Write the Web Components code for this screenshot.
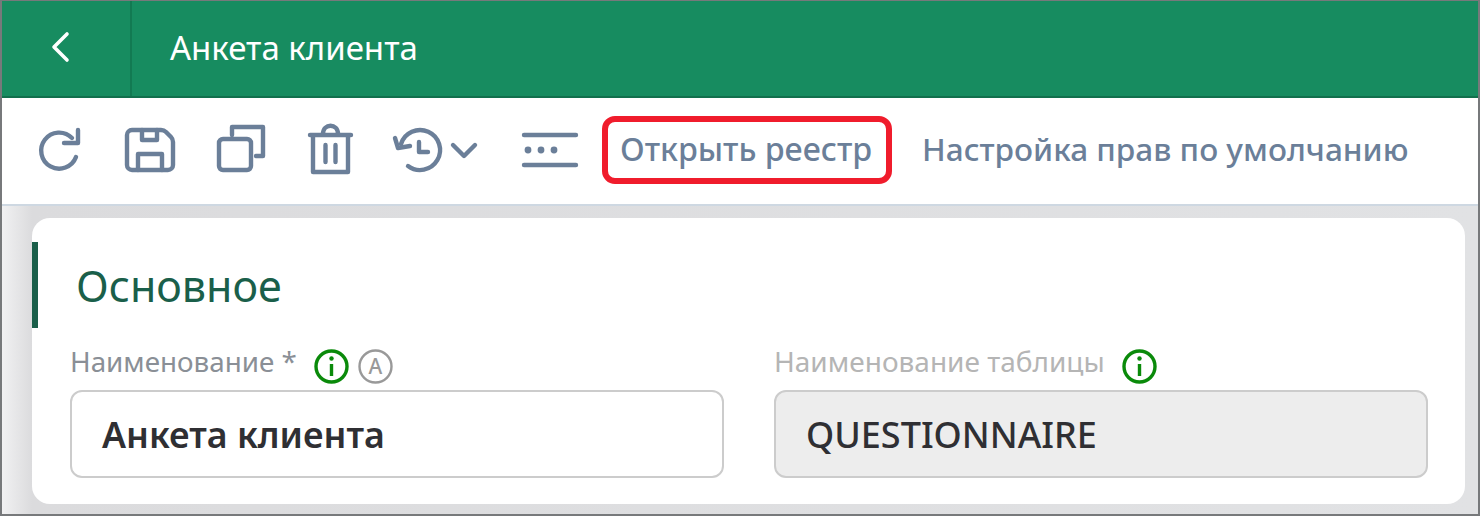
<!DOCTYPE html>
<html><head><meta charset="utf-8"><style>
html,body{margin:0;padding:0;height:516px;overflow:hidden;background:#fff}
body{font-family:"Noto Sans",Roboto,sans-serif}
</style></head><body>
<app-frame>
<app-header title-text="Анкета клиента"></app-header>
<app-toolbar></app-toolbar>
<section-card>
 <form-field slot="a" label="Наименование *" value="Анкета клиента" auto></form-field>
 <form-field slot="b" label="Наименование таблицы" value="QUESTIONNAIRE" disabled></form-field>
</section-card>
</app-frame>
<script>
function def(name,html){customElements.define(name,class extends HTMLElement{constructor(){super();this.attachShadow({mode:'open'}).innerHTML=html;}});}
def('app-frame',`<style>:host{display:flex;flex-direction:column;box-sizing:border-box;width:1480px;height:516px;border:solid #77797b;border-width:1px 2px 2px 2px;background:linear-gradient(90deg,#f1f1f2 0,#dbdbdd 30px,#e1e2e4 100%)}</style><slot></slot>`);
def('app-header',`<style>:host{display:flex;box-sizing:border-box;height:97px;background:#178c60;border-bottom:2px solid #12704d;color:#fff;flex:none}
.b{box-sizing:border-box;width:130px;padding:0 0 0 48px;display:flex;align-items:center;border-right:2px solid #127a52}
.t{font-size:33px;line-height:94px;padding-left:38px;white-space:nowrap}
svg{display:block;margin-top:-4px}</style><div class="b"><svg width="20" height="32" viewBox="0 0 20 32" fill="none" stroke="#fff" stroke-width="3.600" stroke-linecap="round" stroke-linejoin="round"><path d="M17 3 4 16 17 29"/></svg></div><div class="t">Анкета клиента</div>`);
const ic='fill="none" stroke="#6b7f99" stroke-width="4.400" stroke-linecap="round" stroke-linejoin="round"';
const vb=(x0,w,ml,body)=>`<svg style="margin-left:${ml}px" width="${w}" height="60" viewBox="${x0} 121 ${w} 60" ${ic}>${body}</svg>`;
def('app-toolbar',`<style>:host{display:flex;align-items:center;height:106px;background:#fff;border-bottom:2px solid #ced8e2;flex:none;padding-left:34px;color:#6b7f99;font-size:31.600px;font-weight:500}
svg{display:block;flex:none}
.btn{box-sizing:border-box;height:68px;width:290px;margin-left:22px;border:6px solid #f01c2c;border-radius:13px;display:flex;align-items:center;padding-left:12px;margin-top:-2px;white-space:nowrap}
.l{margin-left:30px;white-space:nowrap;margin-top:-5px}.btn span{margin-top:-3px;font-size:32.200px}</style>
${vb(36,48,0,'<path d="M76 157A18 18 0 1 1 72 138"/><path d="M78 130V143H64"/>')}
${vb(122,56,38,'<path d="M132 130H161Q164 130 166 132L171 137Q173 139 173 142V165a5 5 0 0 1-5 5H132a5 5 0 0 1-5-5V135a5 5 0 0 1 5-5Z"/><path d="M142 130V140H157V130M138 170V154H162V170"/>')}
${vb(214,54,36,'<rect x="219" y="139" width="32" height="31" rx="4"/><path d="M232 135V127H263V156H256"/>')}
${vb(304,54,36,'<path d="M310 135H351M313 136V172H348V136M323 134C323 123 338 123 338 134M325.500 145V162M335.500 145V162"/>')}
${vb(390,56,32,'<path d="M401 144A20 20 0 1 1 408 166"/><path d="M395 138 398 148 410 146M419 142V152H428"/>')}
${vb(448,32,2,'<path d="M453 145 464 156 475 145"/>')}
${vb(520,60,40,'<path d="M524 135H576M524 165H576"/><g fill="#6b7f99" stroke="none"><circle cx="528" cy="150" r="3.400"/><circle cx="541" cy="150" r="3.400"/><circle cx="554" cy="150" r="3.400"/></g>')}
<div class="btn"><span>Открыть реестр</span></div><div class="l">Настройка прав по умолчанию</div>`);
def('section-card',`<style>:host{display:block;box-sizing:border-box;margin:12px 13px 0 30px;height:286px;background:#fff;border-radius:18px;padding-top:24px}
.h{box-sizing:border-box;height:86px;border-left:6px solid #1a5f4a;padding-left:38px;font-size:43px;line-height:88px;color:#1a5f4a}
.g{display:grid;grid-template-columns:654px 654px;column-gap:50px;padding-left:38px;margin-top:21px}</style>
<div class="h">Основное</div><div class="g"><slot name="a"></slot><slot name="b"></slot></div>`);
customElements.define('form-field',class extends HTMLElement{constructor(){super();this.attachShadow({mode:'open'})}
connectedCallback(){const d=this.hasAttribute('disabled');
const info=`<svg width="35" height="35" viewBox="0 0 35 35" fill="none"><circle cx="17.500" cy="17.500" r="15.500" stroke="#0a8a0a" stroke-width="3.400"/><path d="M17.500 15V27" stroke="#0a8a0a" stroke-width="3.400"/><circle cx="17.500" cy="9.500" r="2.200" fill="#0a8a0a"/></svg>`;
const auto=`<svg width="35" height="35" viewBox="0 0 35 35" fill="none"><circle cx="17.500" cy="17.500" r="16" stroke="#999" stroke-width="2.400"/><text x="17.500" y="25" text-anchor="middle" font-size="21" font-weight="500" fill="#999" font-family="Noto Sans">A</text></svg>`;
this.shadowRoot.innerHTML=`<style>:host{display:block}
.l{display:flex;align-items:center;height:34px;font-size:${d?28:27.8}px;color:${d?'#b5b5b5':'#8a8f96'}}
.l span{white-space:nowrap;margin:-10px 17px 0 0}
.l svg+svg{margin-left:9px}
.i{box-sizing:border-box;height:88px;margin-top:7px;border:2px solid #ccc;border-radius:12px;background:${d?'#ededed':'#fff'};color:#2f2f33;font-size:${d?36:35.8}px;font-weight:${d?500:600};line-height:85px;padding-left:30px;white-space:nowrap}</style>
<div class="l"><span>${this.getAttribute('label')}</span>${info}${this.hasAttribute('auto')?auto:''}</div><div class="i">${this.getAttribute('value')}</div>`;}});
</script>
</body></html>
